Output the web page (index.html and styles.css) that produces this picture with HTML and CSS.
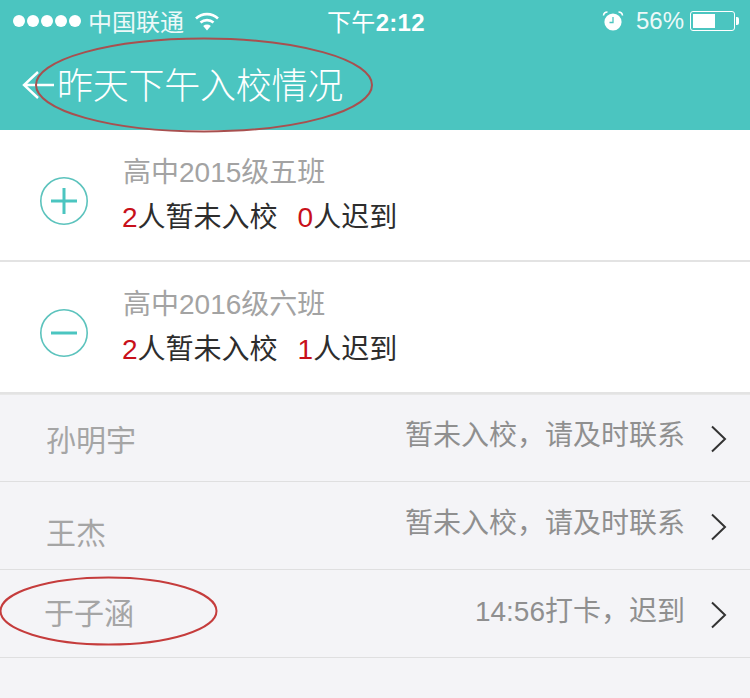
FILE: index.html
```html
<!DOCTYPE html>
<html lang="zh-CN">
<head>
    <meta charset="UTF-8">
    <meta name="viewport" content="width=device-width, initial-scale=1.0">
    <title>昨天下午入校情况</title>
    <link rel="stylesheet" href="styles.css">
</head>
<body>
    <div class="page">
        <header class="top">
            <div class="status-bar">
                <div class="status-left">
                    <div class="signal"><i></i><i></i><i></i><i></i><i></i></div>
                    <span class="carrier">中国联通</span>
                    <svg class="wifi" width="26" height="20" viewBox="0 0 26 20">
                        <path d="M2 7.5 A16 16 0 0 1 24 7.5" fill="none" stroke="#fff" stroke-width="2.6"/>
                        <path d="M6.5 11.5 A10 10 0 0 1 19.5 11.5" fill="none" stroke="#fff" stroke-width="2.6"/>
                        <path d="M13 19.5 L9.2 15 A5.6 5.6 0 0 1 16.8 15 Z" fill="#fff"/>
                    </svg>
                </div>
                <span class="clock">下午<b>2:12</b></span>
                <div class="status-right">
                    <svg class="alarm" width="22" height="22" viewBox="0 0 22 22">
                        <circle cx="11" cy="12" r="8.6" fill="#fff"/>
                        <path d="M11 7 V12.5 H7.5" fill="none" stroke="#4bc5c0" stroke-width="1.3"/>
                        <path d="M1.5 5.5 A4 4 0 0 1 5.5 2" fill="none" stroke="#fff" stroke-width="1.6"/>
                        <path d="M16.5 2 A4 4 0 0 1 20.5 5.5" fill="none" stroke="#fff" stroke-width="1.6"/>
                    </svg>
                    <span class="percent">56%</span>
                    <div class="battery"><div class="battery-fill"></div></div>
                    <div class="battery-cap"></div>
                </div>
            </div>
            <div class="nav-bar">
                <svg class="back" width="36" height="36" viewBox="0 0 36 36">
                    <path d="M17 5 L3 18 L17 31 M3 18 H33" fill="none" stroke="#fff" stroke-width="2.4"/>
                </svg>
                <h1 class="nav-title">昨天下午入校情况</h1>
            </div>
        </header>

        <section class="class-row">
            <svg class="toggle" width="50" height="50" viewBox="0 0 50 50">
                <circle cx="25" cy="25" r="23.2" fill="none" stroke="#5cc3bd" stroke-width="1.6"/>
                <path d="M12 25 H38 M25 12 V38" fill="none" stroke="#4bc5c0" stroke-width="3"/>
            </svg>
            <div class="class-info">
                <div class="class-name">高中2015级五班</div>
                <div class="class-stat"><b>2</b>人暂未入校<b class="late">0</b>人迟到</div>
            </div>
        </section>
        <section class="class-row">
            <svg class="toggle" width="50" height="50" viewBox="0 0 50 50">
                <circle cx="25" cy="25" r="23.2" fill="none" stroke="#5cc3bd" stroke-width="1.6"/>
                <path d="M12 25 H38" fill="none" stroke="#4bc5c0" stroke-width="3"/>
            </svg>
            <div class="class-info">
                <div class="class-name">高中2016级六班</div>
                <div class="class-stat"><b>2</b>人暂未入校<b class="late">1</b>人迟到</div>
            </div>
        </section>

        <ul class="students">
            <li class="student">
                <span class="student-name name-low">孙明宇</span>
                <span class="student-note">暂未入校，请及时联系</span>
                <svg class="chevron" width="18" height="28" viewBox="0 0 18 28"><path d="M2 1.5 L15 14 L2 26.5" fill="none" stroke="#333" stroke-width="2"/></svg>
            </li>
            <li class="student">
                <span class="student-name name-lower">王杰</span>
                <span class="student-note">暂未入校，请及时联系</span>
                <svg class="chevron" width="18" height="28" viewBox="0 0 18 28"><path d="M2 1.5 L15 14 L2 26.5" fill="none" stroke="#333" stroke-width="2"/></svg>
            </li>
            <li class="student">
                <span class="student-name name-left">于子涵</span>
                <span class="student-note">14:56打卡，迟到</span>
                <svg class="chevron" width="18" height="28" viewBox="0 0 18 28"><path d="M2 1.5 L15 14 L2 26.5" fill="none" stroke="#333" stroke-width="2"/></svg>
            </li>
        </ul>

        <!-- red pen marks drawn over the screenshot -->
        <svg class="marks" width="750" height="698" viewBox="0 0 750 698">
            <ellipse cx="204" cy="85" rx="168" ry="46.5" fill="none" stroke="#a8504f" stroke-width="2"/>
            <ellipse cx="108.5" cy="611" rx="108" ry="33.5" fill="none" stroke="#c53c3c" stroke-width="2"/>
        </svg>
    </div>
</body>
</html>
```

FILE: styles.css
```css
* {
    margin: 0;
    padding: 0;
    box-sizing: border-box;
}

body {
    font-family: "Liberation Sans", "Noto Sans CJK SC", sans-serif;
    background: #f4f4f7;
    overflow: hidden;
}

.page {
    position: relative;
    width: 750px;
    height: 698px;
    overflow: hidden;
}

.top {
    height: 130px;
    background: #4bc5c0;
    color: #fff;
}

.status-bar {
    height: 40px;
    display: flex;
    align-items: center;
    justify-content: space-between;
    padding: 1px 11px 0 13px;
    font-size: 24px;
}

.status-left,
.status-right {
    display: flex;
    align-items: center;
    width: 240px;
}

.status-right {
    justify-content: flex-end;
}

.signal {
    display: flex;
    gap: 2px;
}

.signal i {
    width: 12px;
    height: 12px;
    border-radius: 50%;
    background: #fff;
}

.carrier {
    margin-left: 7px;
    opacity: 0.9;
}

.wifi {
    margin-left: 10px;
}

.clock {
    letter-spacing: 0.3px;
}

.clock b {
    font-weight: 700;
}

.alarm {
    margin-right: 12px;
}

.percent {
    margin-right: 6px;
    opacity: 0.9;
}

.battery {
    width: 45px;
    height: 20px;
    border: 1px solid #fff;
    border-radius: 3px;
    padding: 2px;
}

.battery-fill {
    width: 56%;
    height: 100%;
    background: #fff;
}

.battery-cap {
    width: 3px;
    height: 8px;
    margin-left: 1px;
    background: #fff;
    border-radius: 0 2px 2px 0;
}

.nav-bar {
    height: 90px;
    display: flex;
    align-items: center;
    padding: 0 0 0 21px;
}

.nav-title {
    font-size: 36px;
    font-weight: 300;
    letter-spacing: -0.25px;
    margin-bottom: 4px;
}

.class-row {
    height: 132px;
    display: flex;
    align-items: center;
    background: #fff;
    border-bottom: 2px solid #e3e3e3;
    padding: 0 0 2px 39px;
}

.toggle {
    flex: none;
    margin-top: 14px;
}

.class-info {
    margin-left: 34px;
    margin-top: 6px;
}

.class-name {
    font-size: 28px;
    line-height: 42px;
    color: #a3a3a3;
}

.class-stat {
    font-size: 28px;
    line-height: 48px;
    margin-left: -1px;
    color: #2d2d2d;
}

.class-stat b {
    font-weight: 400;
    color: #c8101a;
}

.class-stat .late {
    margin-left: 20px;
}

.students {
    list-style: none;
    background: #f4f4f7;
    box-shadow: inset 0 1px 0 #e8e8e8;
}

.student {
    height: 88px;
    display: flex;
    align-items: center;
    border-bottom: 1px solid #dfdfe0;
    padding: 0 22px 0 46px;
}

.student-name {
    font-size: 30px;
    color: #a5a5a5;
}

.name-low {
    margin-top: 1px;
}

.name-lower {
    margin-top: 10px;
}

.name-left {
    margin-left: -2px;
    margin-bottom: 5px;
}

.student-note {
    margin-left: auto;
    font-size: 28px;
    color: #8f8f8f;
    margin-bottom: 10px;
}

.chevron {
    margin-left: 25px;
    margin-top: 2px;
}

.marks {
    position: absolute;
    top: 0;
    left: 0;
    pointer-events: none;
}
```
